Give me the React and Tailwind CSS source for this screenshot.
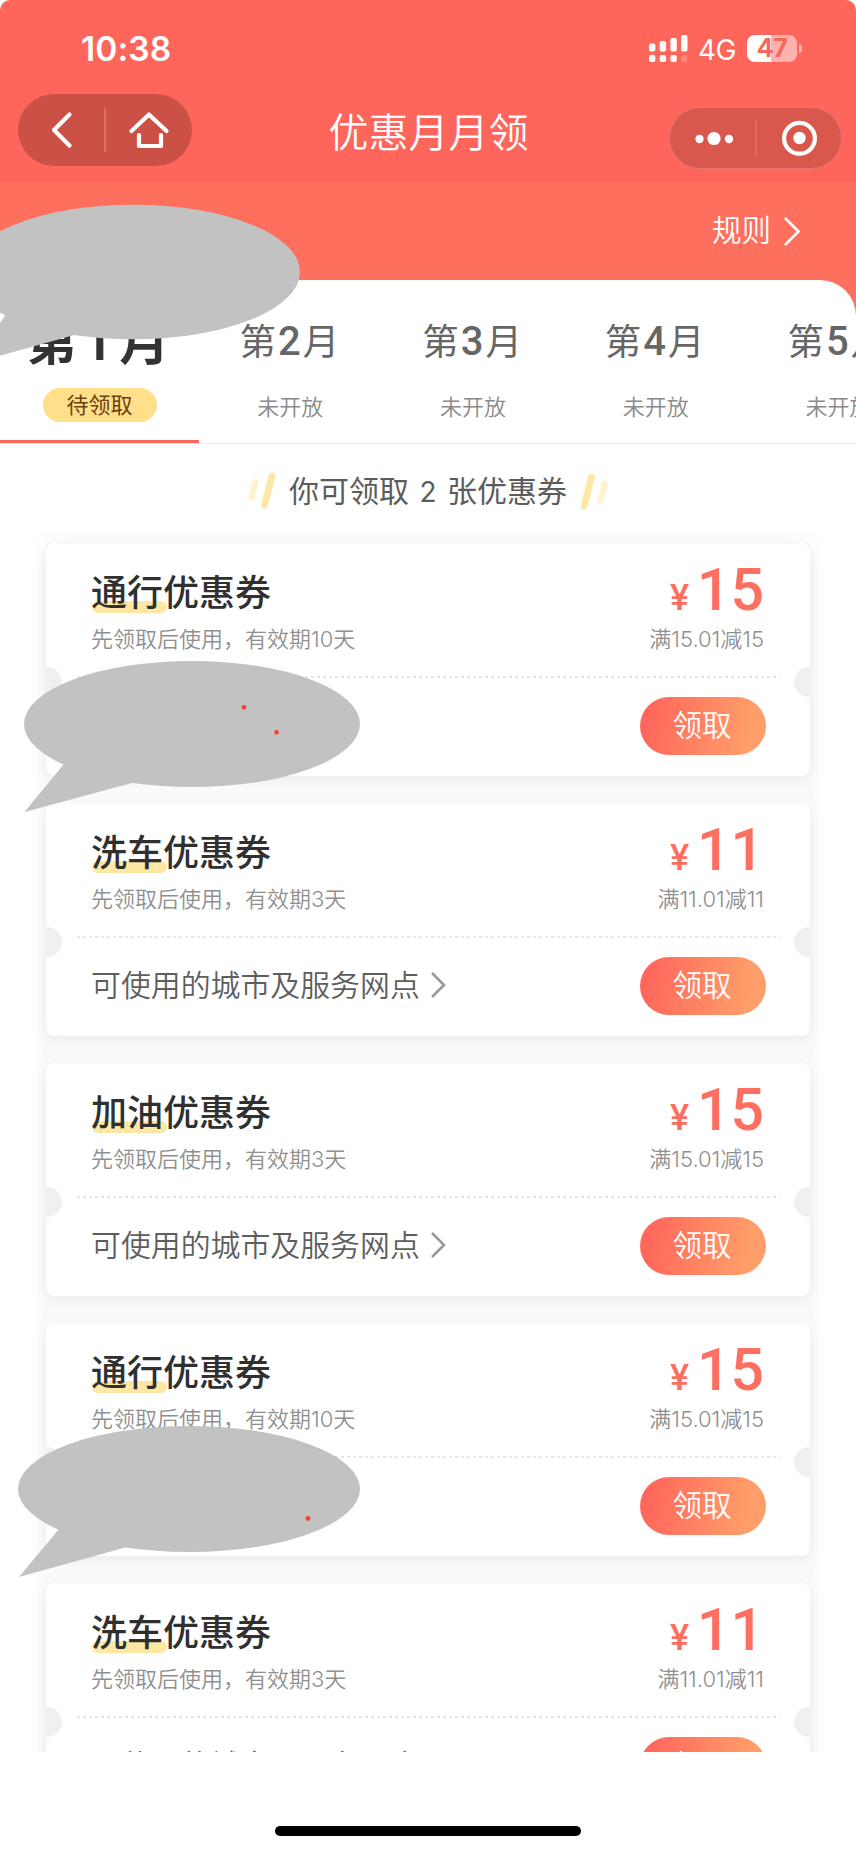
const CJK = "font-['Noto_Sans_CJK_SC',sans-serif]";
const MIXED = "font-['Inter','Noto_Sans_CJK_SC',sans-serif]";

const months = [2, 3, 4, 5];

const coupons = [
  { kind: "通行", days: 10, amount: 15, link: "" },
  { kind: "洗车", days: 3, amount: 11, link: "可使用的城市及服务网点" },
  { kind: "加油", days: 3, amount: 15, link: "可使用的城市及服务网点" },
  { kind: "通行", days: 10, amount: 15, link: "" },
  { kind: "洗车", days: 3, amount: 11, link: "可使用的城市及服务网点" },
];

function StatusBar() {
  return (
    <div className="flex h-[94px] items-start pt-[34px] pr-[54px] pl-[81px] text-white font-['Inter',sans-serif]">
      <span className="text-[33.500px] leading-[30px] font-semibold tracking-[0.100px]">10:38</span>
      <svg className="ml-auto" width="40" height="30" viewBox="0 0 40 30" fill="#fff">
        <rect x="0" y="9.5" width="6.4" height="8" rx="2" />
        <rect x="10.7" y="7" width="6.4" height="10.5" rx="2" />
        <rect x="21.4" y="4" width="6.4" height="13.5" rx="2" />
        <rect x="32.1" y="1" width="6.4" height="16.5" rx="2" />
        <rect x="0" y="21" width="6.4" height="7" rx="2" />
        <rect x="10.7" y="21" width="6.4" height="7" rx="2" />
        <rect x="21.4" y="21" width="6.4" height="7" rx="2" />
        <rect x="32.1" y="21" width="6.4" height="7" rx="2" opacity=".2" />
      </svg>
      <span className="ml-[9px] w-[41px] text-[28px] leading-[32px] tracking-[-0.500px]">4G</span>
      <div className="ml-[8px] flex items-center pt-px">
        <div className="flex h-[27px] w-[50px] items-center justify-center rounded-[8px] bg-[linear-gradient(90deg,#fff_47%,#ffb2ad_47%)] text-[25px] leading-[27px] font-bold tracking-[-0.5px] text-[#f5685d]">
          47
        </div>
        <div className="ml-[2px] h-[9px] w-[3px] rounded-r-full bg-[#ffb2ad]" />
      </div>
    </div>
  );
}

function NavBar() {
  return (
    <div className="flex h-[88px] items-start justify-between pr-[14px] pl-[18px]">
      <div className="flex h-[72px] w-[174px] rounded-full bg-[#cb5147]">
        <svg width="174" height="72" viewBox="0 0 174 72" fill="none" stroke="#fff" strokeWidth="4.2" strokeLinecap="round" strokeLinejoin="round">
          <path d="M51.500 20.500 L36 36 L51.500 51.500" />
          <path d="M87 14V58" stroke="#db7b72" strokeWidth="1.6" strokeLinecap="butt" />
          <path d="M113.500 37 L131 20.500 L148.500 37" />
          <path d="M121 41V52H143V41" />
        </svg>
      </div>
      <h1 className={`mr-[4px] pt-[6px] text-[40px] leading-[60px] font-[350] text-white ${CJK}`}>优惠月月领</h1>
      <div className="mt-[13px] flex h-[62px] w-[173px] rounded-full bg-[#d9574c] shadow-[0_0_0_1px_#e5796e_inset]">
        <svg width="173" height="62" viewBox="0 0 173 62" fill="#fff">
          <circle cx="30.500" cy="32" r="4.200" />
          <circle cx="45" cy="31.500" r="6.600" />
          <circle cx="60" cy="32" r="4.200" />
          <rect x="86.500" y="13" width="1.200" height="36" fill="#e5796e" />
          <circle cx="130.500" cy="31.300" r="15.400" fill="none" stroke="#fff" strokeWidth="4.200" />
          <circle cx="130.500" cy="31" r="6.200" />
        </svg>
      </div>
    </div>
  );
}

function MonthTabs() {
  return (
    <div className="flex h-[164px] w-[856px] overflow-hidden rounded-tr-[36px] border-b border-[#ededed] bg-white">
      <div className="flex h-[164px] w-[199px] shrink-0 flex-col items-center border-b-4 border-[#ff665b]">
        <div className={`mr-[3px] mt-[22px] flex h-[56px] items-baseline text-[50px] leading-[72px] font-bold whitespace-nowrap text-[#333] ${CJK}`}>
          <span>第</span>
          <span className="mx-[7px] font-['Roboto',sans-serif] text-[50px]">1</span>
          <span>月</span>
        </div>
        <div className={`mt-[30px] h-[34px] w-[114px] rounded-full bg-[#ffdf8a] text-center text-[22px] leading-[31px] text-[#6b430f] ${CJK}`}>
          待领取
        </div>
      </div>
      {months.map((month) => (
        <div key={month} className={`flex w-[182.700px] shrink-0 flex-col items-center ${CJK}`}>
          <div className="mt-[32px] mr-[2px] flex h-[56px] items-baseline text-[36.500px] leading-[56px] text-[#666]">
            <span>第</span>
            <span className="mx-[2px] font-['Roboto',sans-serif] text-[40px] font-medium">{month}</span>
            <span>月</span>
          </div>
          <div className="mt-[21px] text-[22px] leading-[33px] font-[350] text-[#8a8a8a]">未开放</div>
        </div>
      ))}
    </div>
  );
}

function Slashes({ flipped }) {
  return (
    <svg className={flipped ? "rotate-180" : ""} width="28" height="38" viewBox="0 0 28 38" fill="none" strokeLinecap="round">
      <path d="M8.500 10 L4.500 26" stroke="#fff3cf" strokeWidth="6.500" />
      <path d="M25 4 L17.500 33" stroke="#fee7a2" strokeWidth="6.800" />
    </svg>
  );
}

function Coupon({ kind, days, amount, link }) {
  return (
    <article className="relative h-[233px] w-[764px] shrink-0 overflow-hidden rounded-[9px] bg-white">
      <div className="flex h-[133px] justify-between pr-[46px] pl-[45px]">
        <div className="pt-[20px]">
          <h2 className={`h-[54px] text-[36px] leading-[54px] font-medium text-[#303030] ${CJK}`}>
            <span className="relative isolate inline-block h-[54px]">
              <span className="absolute top-[38px] left-px -z-10 h-[12px] w-[75px] rounded-[6px] bg-[#fee6a3]" />
              {kind}
            </span>
            优惠券
          </h2>
          <p className={`mt-[6px] text-[22px] leading-[33px] font-[350] text-[#8f8f8f] ${MIXED}`}>
            先领取后使用，有效期{days}天
          </p>
        </div>
        <div className="flex flex-col items-end pt-[12px]">
          <div className="flex h-[66px] w-[94px] items-baseline font-['Roboto',sans-serif] leading-[70px] font-medium text-[#fd7061]">
            <span className="w-[30px] text-[36px]">¥</span>
            <span className="text-[59px]">{amount}</span>
          </div>
          <p className={`mt-[2px] text-[22px] leading-[33px] font-[350] text-[#8f8f8f] ${MIXED}`}>
            满{amount}.01减{amount}
          </p>
        </div>
      </div>
      <svg className="ml-[31px] block" width="703" height="2">
        <path d="M0 1H703" stroke="#e0e0e0" strokeWidth="1.500" strokeDasharray="3 3" />
      </svg>
      <div className="absolute top-[124px] -left-[14px] size-[30px] rounded-full bg-[#f0f0f0]" />
      <div className="absolute top-[124px] -right-[14px] size-[30px] rounded-full bg-[#f0f0f0]" />
      <div className="flex h-[98px] items-start justify-end pt-[19px] pr-[44px] pl-[45px]">
        {link && (
          <div className={`-mt-[4px] mr-auto flex items-center text-[29.900px] leading-[60px] font-[350] text-[#5e5e5e] ${CJK}`}>
            {link}
            <svg className="mt-[4px] ml-[10px]" width="16" height="28" viewBox="0 0 16 28" fill="none" stroke="#999" strokeWidth="2.600">
              <path d="M2 2 L14 14 L2 26" />
            </svg>
          </div>
        )}
        <button className={`h-[58px] w-[126px] rounded-full bg-[linear-gradient(100deg,#ff675c_8%,#ff9e69_85%)] pr-[2px] pb-[5px] text-[29.500px] leading-[53px] font-[350] text-white ${CJK}`}>
          领取
        </button>
      </div>
    </article>
  );
}

export default function App() {
  return (
    <main className="relative flex h-[1852px] w-[856px] flex-col overflow-hidden bg-white">
      <div className="h-[182px] shrink-0 rounded-t-[10px] bg-[#ff665b]">
        <StatusBar />
        <NavBar />
      </div>
      <div className="shrink-0 bg-[#ff6f5d]">
        <div className={`flex h-[98px] items-center justify-end pr-[55px] text-[29.500px] leading-[44px] font-[350] text-white ${CJK}`}>
          <span className="-mt-[6px]">规则</span>
          <svg className="ml-[12px]" width="18" height="32" viewBox="0 0 18 32" fill="none" stroke="#fff" strokeWidth="2.600">
            <path d="M2 3 L15.500 16.500 L2 30" />
          </svg>
        </div>
        <MonthTabs />
      </div>
      <section className="flex h-[1308px] shrink-0 flex-col items-center overflow-hidden">
        <div className={`flex h-[99px] shrink-0 items-center gap-[14px] pb-[6px] text-[30px] leading-[44px] text-[#5c5c5c] ${CJK}`}>
          <Slashes />
          <p>
            你可领取<span className="mx-[10.500px] font-['Inter',sans-serif] text-[28px]">2</span>张优惠券
          </p>
          <Slashes flipped />
        </div>
        <div className="flex w-[764px] flex-col gap-[27px] bg-[#fafafa] shadow-[0_0_24px_rgba(0,0,0,0.05)]">
          {coupons.map((coupon, i) => (
            <div key={i} className="rounded-[9px] shadow-[0_4px_12px_rgba(0,0,0,0.06)]">
              <Coupon {...coupon} />
            </div>
          ))}
        </div>
      </section>
      <div className="flex h-[100px] shrink-0 items-start justify-center bg-white pt-[74px]">
        <div className="h-[10px] w-[306px] rounded-full bg-black" />
      </div>

      <svg className="absolute top-0 left-0" width="856" height="1852" viewBox="0 0 856 1852" fill="#c2c2c2">
        <ellipse cx="133" cy="272" rx="167" ry="67.300" />
        <path d="M5.500 315 L-29 364 L76 334.500 L76 300Z" />
        <ellipse cx="192" cy="724" rx="168" ry="63" />
        <path d="M64 764 L24.500 812 L132 783 L132 740Z" />
        <ellipse cx="189" cy="1489" rx="171" ry="63" />
        <path d="M59 1529 L19 1577 L127 1547 L127 1500Z" />
        <g fill="#f04438">
          <circle cx="244" cy="707.300" r="2.400" />
          <circle cx="276.500" cy="732.300" r="2.400" />
          <circle cx="308" cy="1518.500" r="2.400" />
        </g>
      </svg>
    </main>
  );
}
